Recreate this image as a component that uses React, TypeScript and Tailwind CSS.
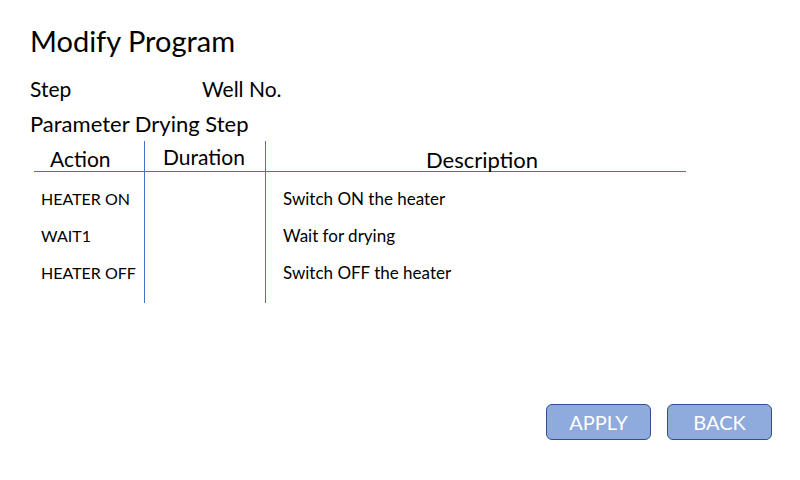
const rows = [
  { action: "HEATER ON", description: "Switch ON the heater" },
  { action: "WAIT1", description: "Wait for drying" },
  { action: "HEATER OFF", description: "Switch OFF the heater" },
];

export default function App() {
  return (
    <div className="w-[800px] h-[480px] bg-white text-black flex flex-col font-['Lato',sans-serif]">
      <div className="pl-[30px] pt-[24px]">
        <h1 className="text-[29px] leading-[34px]">Modify Program</h1>

        <div className="flex mt-[17px] text-[21px] leading-[28px]">
          <span className="w-[172px]">Step</span>
          <span>Well No.</span>
        </div>
        <div className="mt-[7px] text-[22px] leading-[28px]">Parameter Drying Step</div>

        {/* Table */}
        <div className="flex ml-[4px] mt-[3px] w-[652px]">
          <div className="w-[110px] flex flex-col">
            <div className="h-[31px] border-b border-[#4472c4] text-[21px] leading-[26px] pl-[16px] pt-[5px]">
              Action
            </div>
            <div className="pt-[15px] pb-[18px] flex flex-col gap-[13px] text-[16px] leading-[24px] pl-[7px]">
              {rows.map((r) => (
                <div key={r.action}>{r.action}</div>
              ))}
            </div>
          </div>
          <div className="w-[121px] flex flex-col border-l border-[#4472c4]">
            <div className="h-[31px] border-b border-[#4472c4] text-[21px] leading-[26px] pl-[18px] pt-[3px]">
              Duration
            </div>
          </div>
          <div className="flex-1 flex flex-col border-l border-[#4472c4]">
            <div className="h-[31px] border-b border-[#4472c4] text-[22px] leading-[26px] text-center pt-[6px] pl-[12px]">
              Description
            </div>
            <div className="pt-[15px] flex flex-col gap-[13px] text-[17px] leading-[24px] pl-[17px]">
              {rows.map((r) => (
                <div key={r.description}>{r.description}</div>
              ))}
            </div>
          </div>
        </div>
      </div>

      <div className="mt-auto flex justify-end gap-[16px] pr-[28px] pb-[40px]">
        <button className="w-[105px] h-[36px] rounded-[6px] bg-[#8faadc] border border-[#2f528f] text-white text-[20px]">
          APPLY
        </button>
        <button className="w-[105px] h-[36px] rounded-[6px] bg-[#8faadc] border border-[#2f528f] text-white text-[20px]">
          BACK
        </button>
      </div>
    </div>
  );
}
